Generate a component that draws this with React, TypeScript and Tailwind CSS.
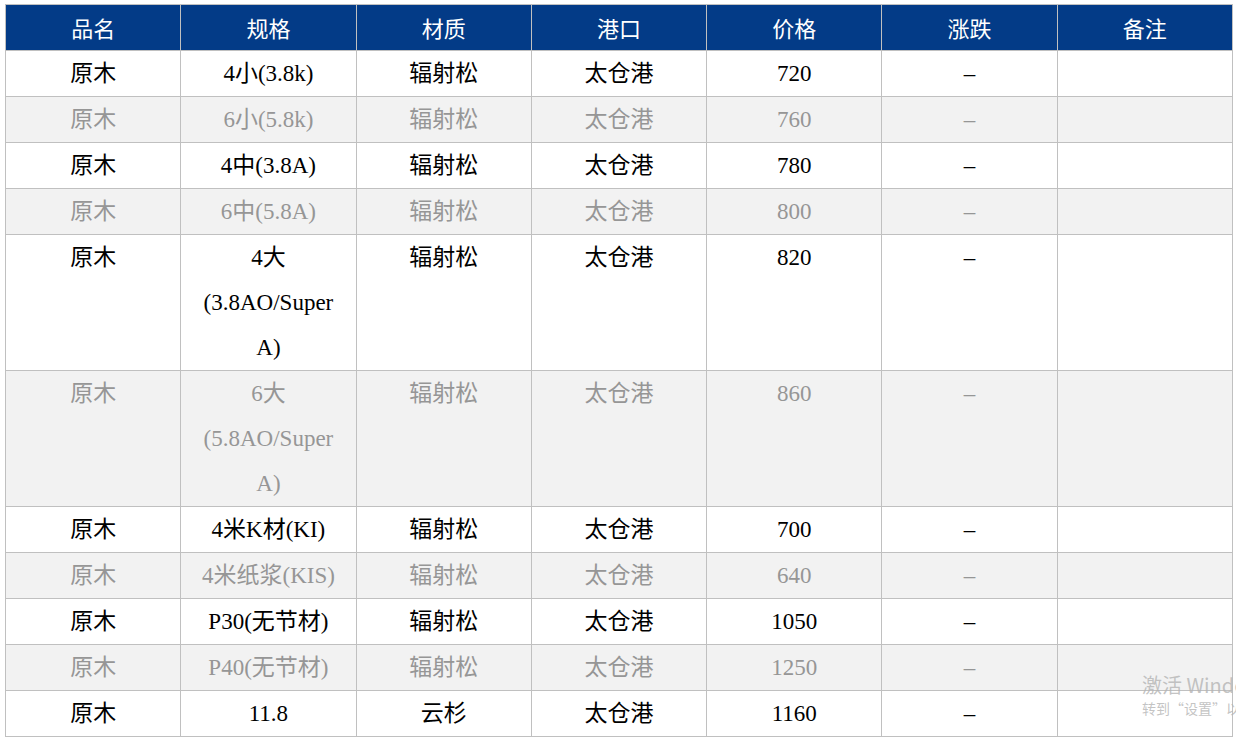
const headers = ["品名", "规格", "材质", "港口", "价格", "涨跌", "备注"];

const rows: { spec: string[]; material: string; price: string }[] = [
  { spec: ["4小(3.8k)"], material: "辐射松", price: "720" },
  { spec: ["6小(5.8k)"], material: "辐射松", price: "760" },
  { spec: ["4中(3.8A)"], material: "辐射松", price: "780" },
  { spec: ["6中(5.8A)"], material: "辐射松", price: "800" },
  { spec: ["4大", "(3.8AO/Super", "A)"], material: "辐射松", price: "820" },
  { spec: ["6大", "(5.8AO/Super", "A)"], material: "辐射松", price: "860" },
  { spec: ["4米K材(KI)"], material: "辐射松", price: "700" },
  { spec: ["4米纸浆(KIS)"], material: "辐射松", price: "640" },
  { spec: ["P30(无节材)"], material: "辐射松", price: "1050" },
  { spec: ["P40(无节材)"], material: "辐射松", price: "1250" },
  { spec: ["11.8"], material: "云杉", price: "1160" },
];

const cell = "border border-[#c0c0c0] px-2 py-0 text-center align-top leading-[45px]";

export default function App() {
  return (
    <div className="relative w-[1236px] h-[741px] overflow-hidden bg-white">
      <div className="pt-[4px] pl-[5px]">
        <table className="w-[1228px] table-fixed border-collapse border border-[#c0c0c0] text-[23px] font-['Liberation_Serif','Noto_Sans_CJK_SC',serif]">
          <thead>
            <tr className="bg-[#033b87] text-white">
              {headers.map((h) => (
                <th
                  key={h}
                  className="border border-[#c0c0c0] px-2 py-0 text-center font-normal leading-[45px] text-[22px] font-['Noto_Sans_CJK_SC',sans-serif]"
                >
                  {h}
                </th>
              ))}
            </tr>
          </thead>
          <tbody>
            {rows.map((r, i) => (
              <tr
                key={i}
                className={i % 2 === 0 ? "bg-white text-black" : "bg-[#f2f2f2] text-[#969696]"}
              >
                <td className={cell}>原木</td>
                <td className={cell}>
                  {r.spec.map((line, j) => (
                    <div key={j}>{line}</div>
                  ))}
                </td>
                <td className={cell}>{r.material}</td>
                <td className={cell}>太仓港</td>
                <td className={cell}>{r.price}</td>
                <td className={cell}>–</td>
                <td className={cell}></td>
              </tr>
            ))}
          </tbody>
        </table>
      </div>

      {/* windows activation watermark */}
      <div className="absolute left-[1142px] top-[672px] whitespace-nowrap text-[#b4b4b4]/80 font-['Noto_Sans_CJK_SC',sans-serif] pointer-events-none">
        <div className="text-[20px] leading-[26px]">激活 Windows</div>
        <div className="text-[14px] leading-[20px]">转到“设置”以激活 Windows。</div>
      </div>
    </div>
  );
}
